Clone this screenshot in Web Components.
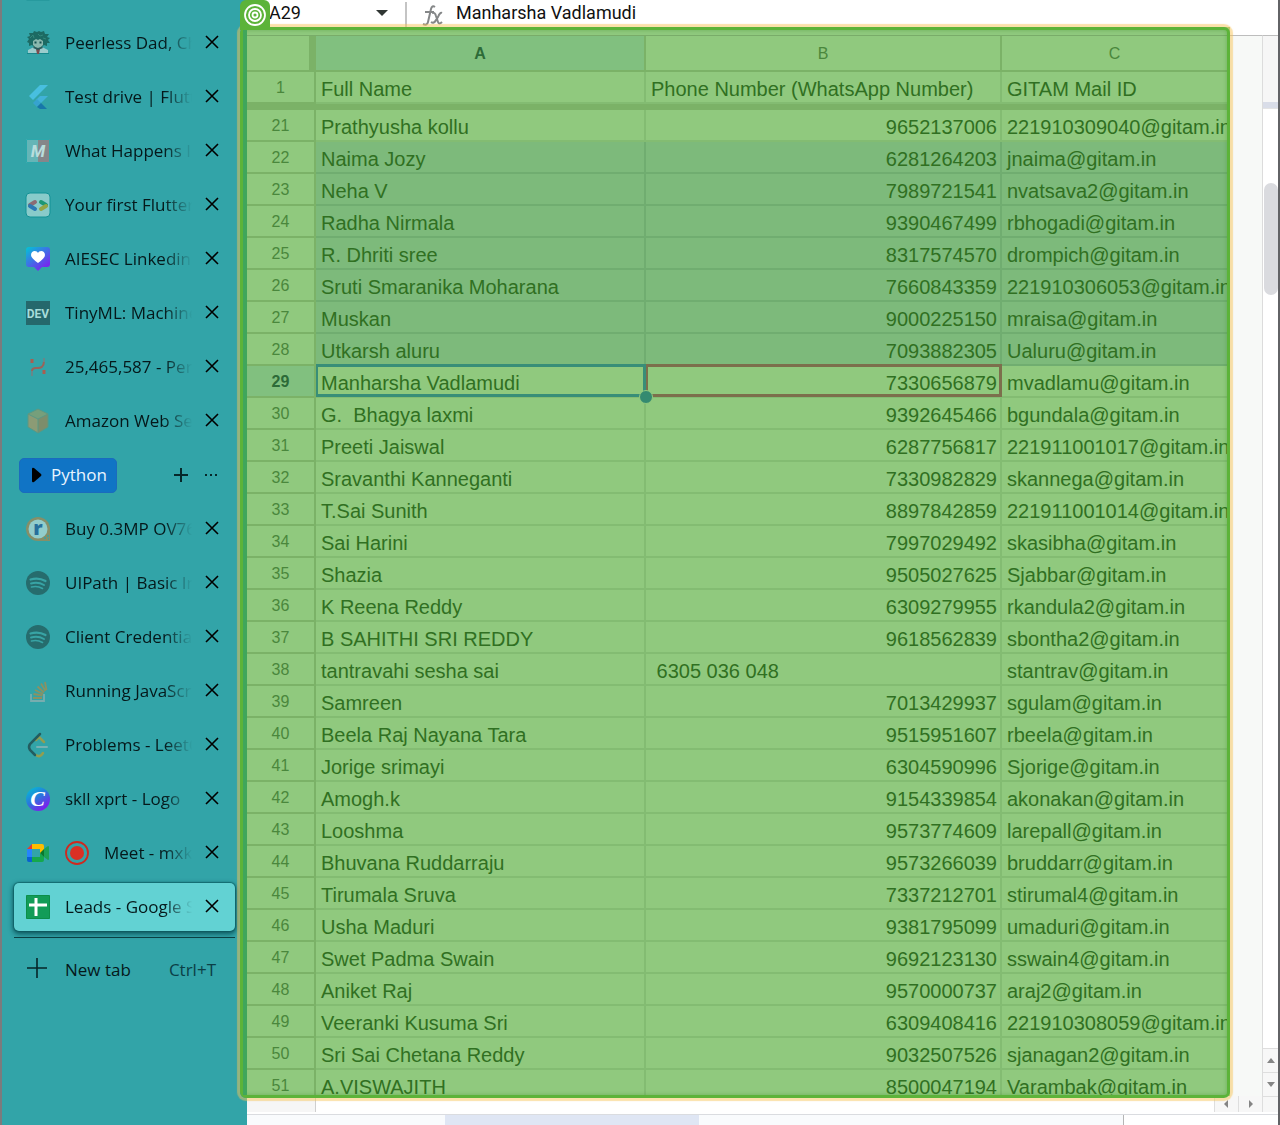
<!DOCTYPE html>
<html lang="en">
<head>
<meta charset="utf-8">
<title>Leads - Google Sheets</title>
<style>
body{margin:0;font-family:"Open Sans","Noto Sans",sans-serif;background:#fff}
</style>
</head>
<body>
<browser-window>
  <tab-strip slot="side">
    <tab-item icon="blank"></tab-item>
    <tab-item icon="hero">Peerless Dad, Chapter 1</tab-item>
    <tab-item icon="flutter">Test drive | Flutter docs</tab-item>
    <tab-item icon="m">What Happens Internally</tab-item>
    <tab-item icon="codelab">Your first Flutter app</tab-item>
    <tab-item icon="heart">AIESEC Linkedin Post</tab-item>
    <tab-item icon="dev">TinyML: Machine Learning</tab-item>
    <tab-item icon="perm">25,465,587 - Personal</tab-item>
    <tab-item icon="box">Amazon Web Services</tab-item>
    <tab-group>Python</tab-group>
    <tab-item icon="robu">Buy 0.3MP OV7670 Camera</tab-item>
    <tab-item icon="wave">UIPath | Basic Intro</tab-item>
    <tab-item icon="wave">Client Credentials Flow</tab-item>
    <tab-item icon="stack">Running JavaScript Code</tab-item>
    <tab-item icon="leet">Problems - LeetCode</tab-item>
    <tab-item icon="canva">skll xprt - Logo</tab-item>
    <tab-item icon="meet" recording>Meet - mxk-room</tab-item>
    <tab-item icon="sheets" active>Leads - Google Sheets</tab-item>
    <new-tab slot="end"></new-tab>
  </tab-strip>
  <sheet-view></sheet-view>
</browser-window>

<script>
const define=(name,html)=>customElements.define(name,class extends HTMLElement{
  constructor(){super();this.attachShadow({mode:'open'})}
  connectedCallback(){
    if(this.shadowRoot.childNodes.length)return;
    this.shadowRoot.innerHTML=typeof html==='function'?html(this):html;
  }
});

const icons={
blank:'<rect x="1" y="1" width="22" height="22" fill="#8fd0cf" stroke="#1c9094"/>',
hero:'<path d="M2 23v-4l6-3 4 3 4-3 6 3v4z" fill="#9bcccd"/><path d="M1 22h22v1H1z" fill="#17888c"/><path d="M10 18h4l-1 5h-2z" fill="#7a4b4f"/><path d="M7 17l2-3h6l2 3-5 2z" fill="#2b5c5c"/><path d="M1 11l2-3-2-2 3-1-1-3 4 0 1-2 3 1 2-1 2 1 3-1 1 3 4 0-2 3 3 1-2 2 2 3-3 0 0 3-3-1-2 2-8 0-2-2-3 1 0-3z" fill="#1c6a63"/><path d="M7 10l3-2 2 1 2-1 3 2v4q-5 6-10 0z" fill="#8ab8ae"/><path d="M4 7l3-3 1 3M12 3l2 2 3-1M17 7l3 1" fill="none" stroke="#32877b"/><path d="M8.500 11.500h2M13.500 11.500h2" stroke="#155150" stroke-width="2"/>',
flutter:'<path d="M14 0h8L7 15l-4-4z" fill="#48bfdf"/><path d="M14 11h8l-7 7-5-3z" fill="#41b2d8"/><path d="M7 18l4-4 4 4-4 4z" fill="#36a3cf"/><path d="M15 18l6 6h-7l-3-2z" fill="#1777a9"/>',
m:'<path d="M0 0h12v24H0z" fill="#65b5b7"/><path d="M12 0h12v24H12z" fill="#85868a"/><path d="M.5.500h23v23H.5z" fill="none" stroke="#2ba8ac"/><text x="12" y="18" text-anchor="middle" font-family="Roboto" font-size="17" font-weight="700" font-style="italic" fill="#b9dddd">M</text>',
codelab:'<rect x="0" y="0" width="24" height="24" rx="4" fill="#89cbca" stroke="#139296"/><g fill="none" stroke-width="4" stroke-linecap="round"><path d="M9 9l-5 3" stroke="#8b6b74"/><path d="M4 13l5 3" stroke="#2b79b5"/><path d="M15 9l5 3" stroke="#1c9775"/><path d="M20 13l-5 3" stroke="#93a545"/></g>',
heart:'<defs><linearGradient id="g" x2=".8" y2="1"><stop stop-color="#00c6d5"/><stop offset=".45" stop-color="#3978e5"/><stop offset="1" stop-color="#8417f1"/></linearGradient></defs><path d="M3 0h18q3 0 3 3v14q0 3-3 3h-5l-4 4-4-4H3q-3 0-3-3V3q0-3 3-3z" fill="url(#g)"/><path d="M12 16Q5 11 5 8c0-5 6-5 7-2 1-3 7-3 7 2q0 3-7 8z" fill="#fff"/>',
dev:'<path d="M0 0h24v24H0z" fill="#25686c"/><text x="12" y="17" text-anchor="middle" font-family="Roboto" font-size="12" font-weight="700" fill="#a7dcda">DEV</text>',
perm:'<g fill="none" stroke-width="2"><path d="M6 16q0-3 4-3 8 1 8-7" stroke="#9a6359"/><path d="M6 4v4M18 15v4" stroke="#a95e50" stroke-width="3"/><path d="M6 16v5M18 3v4" stroke="#67888a"/></g>',
box:'<path d="M12 0l10 5v13l-10 6-10-6V5z" fill="#8c9b75"/><path d="M2 5l10 5 10-5-10-5z" fill="#769f7b"/><path d="M12 10l10-5v13l-10 6z" fill="#7d8d6b"/><path d="M12 0l10 5v13l-10 6-10-6V5zM2 5l10 5 10-5M12 10v13" fill="none" stroke="#5a9884"/>',
robu:'<path d="M12 0a12 12 0 0 1 12 12v12H12a12 12 0 0 1 0-24z" fill="#858f69"/><circle cx="12" cy="12" r="9.500" fill="#92cdcc"/><path d="M18 21h2M21 19h2M22 22h1" stroke="#32a4a8" stroke-width="1.500"/><text x="12" y="18" text-anchor="middle" font-family="Open Sans" font-size="20" font-weight="800" fill="#276f9b">r</text>',
wave:'<circle cx="12" cy="12" r="12" fill="#266c6d"/><g fill="none" stroke="#38a4a5" stroke-linecap="round"><path d="M4.500 8.500q8-2.500 15 1.500" stroke-width="2.200"/><path d="M5 12.500q7-2 13 1.500" stroke-width="1.900"/><path d="M5.500 16q6-1.500 11 1.500" stroke-width="1.600"/></g>',
stack:'<g fill="none" stroke-width="1.800"><path d="M5 15v7h13v-7" stroke="#78adaf"/><path d="M7 19h9M7.500 15l9 1.500M9 11l8 4M11.500 7.500l6.500 6M15 4.500l4.500 7.500M19 3l1.500 8" stroke="#8a9263"/></g>',
leet:'<g fill="none" stroke-width="2.500" stroke-linecap="round"><path d="M10 7l3-3 5 5M10 22q4 3 7-2" stroke="#919e51"/><path d="M14 1L4 11q-2 3 0 6l5 5" stroke="#235d60"/><path d="M11 14h10" stroke="#77b1b3" stroke-width="2"/></g>',
canva:'<defs><linearGradient id="g" x2=".7" y2="1"><stop stop-color="#00c7d2"/><stop offset=".5" stop-color="#267bdc"/><stop offset="1" stop-color="#8515ef"/></linearGradient></defs><circle cx="12" cy="12" r="12" fill="url(#g)"/><text x="11.500" y="19" text-anchor="middle" font-family="Liberation Serif" font-size="22" font-style="italic" font-weight="700" fill="#fff">C</text>',
meet:'<path d="M1 8l5-5v5z" fill="#e33e2e"/><path d="M6 3h10q2 0 2 2v5l-4 3V8H6z" fill="#fdbd00"/><path d="M1 8h5v8H1z" fill="#2684fc"/><path d="M1 16h5v5H3q-2 0-2-2z" fill="#0860d2"/><path d="M6 16h8v-4l4 4v3q0 2-2 2H6z" fill="#15a84c"/><path d="M14 12l4-4v8z" fill="#08792f"/><path d="M18 8l4-3q1 0 1 1v12q0 1-1 1l-4-3z" fill="#1ba157"/>',
sheets:'<rect width="24" height="24" rx="2" fill="#129c58"/><path d="M.5.500h23v23H.5z" fill="none" stroke="#0c8e49"/><path d="M10 3v18M3 10h18" fill="none" stroke="#fff" stroke-width="3"/>'
};
const svg=(body,w=24,h=24)=>`<svg width="${w}" height="${h}" viewBox="0 0 ${w} ${h}" aria-hidden="true">${body}</svg>`;
const btn='button{border:0;background:none;padding:0;margin:0;color:inherit;font:inherit;display:flex;align-items:center;justify-content:center}';

define('browser-window',`<style>
:host{display:flex;height:100vh;box-sizing:border-box;overflow:hidden;border-left:2px solid #7b7b7d;border-right:2px solid #626366}
::slotted(tab-strip){flex:0 0 245px}
</style><slot name="side"></slot><slot></slot>`);

define('tab-strip',`<style>
:host{display:block;background:#32a4a8;color:#05181a;font-size:17px;line-height:24px;box-sizing:border-box;padding:0 12px;overflow:hidden}
nav{margin-top:-35px}
</style><nav><slot></slot></nav><slot name="end"></slot>`);

define('tab-item',el=>`<style>
:host{display:flex;align-items:center;height:48px;margin:0 0 6px;padding:0 15px 0 12px;border-radius:5px}
:host([active]){background:#62d2d3;box-shadow:0 2px 5px 1px #0c555c,0 0 1px 1px #16777b}
a{flex:1;min-width:0;display:flex;align-items:center;color:inherit;text-decoration:none}
svg{flex:none;display:block;overflow:visible}
.t{flex:1;min-width:0;margin-left:15px;white-space:nowrap;overflow:hidden;-webkit-mask-image:linear-gradient(to left,transparent,#000 28px);mask-image:linear-gradient(to left,transparent,#000 28px)}
.rec{margin-left:15px}
${btn}
button{width:16px;height:24px;margin-left:12px}
</style><a href="#">${svg(icons[el.getAttribute('icon')])}${el.hasAttribute('recording')?`<svg class="rec" width="24" height="24" viewBox="0 0 24 24"><circle cx="12" cy="12" r="11" fill="none" stroke="#cf291f" stroke-width="1.800"/><circle cx="12" cy="12" r="7" fill="#da3024"/></svg>`:''}<span class="t"><slot></slot></span></a>
<button aria-label="Close tab">${svg('<path d="M2 1l12 12M14 1L2 13" stroke="#000" stroke-width="1.600"/>',16,16)}</button>`);

define('tab-group',`<style>
:host{display:flex;align-items:center;height:54px;margin-top:-3px;margin-bottom:3px;padding:0 17px 0 5px}
${btn}
.name{height:35px;padding:0 9px 0 12px;gap:8px;background:#1074c5;color:#e9f5ff;border:1px solid #1b6bbd;border-radius:5px}
.add{margin-left:auto;width:18px;height:24px}
.more{width:14px;height:24px;margin-left:14px}
</style><button class="name">${svg('<path d="M0 2q0-2 2-1l7 6q1 1 0 2l-7 6q-2 1-2-1z" fill="#000"/>',11,16)}<slot></slot></button>
<button class="add" aria-label="Add tab">${svg('<path d="M8 1v14M1 8h14" stroke="#06282a" stroke-width="2"/>',16,16)}</button>
<button class="more" aria-label="More">${svg('<path d="M1 2h2M6 2h2M11 2h2" stroke="#06282a" stroke-width="2"/>',14,4)}</button>`);

define('new-tab',`<style>
:host{display:block;border-top:1px solid #0b3f42}
${btn}
button{width:100%;height:64px;padding:0 19px 0 11px;text-align:left}
span{margin-left:16px}
kbd{margin-left:auto;font:inherit;color:#0b3f46}
</style><button>${svg('<path d="M12 0v20M2 10h20" stroke="#062527" stroke-width="1.600"/>')}<span>New tab</span><kbd>Ctrl+T</kbd></button>`);

define('formula-bar',`<style>
:host{display:flex;align-items:center;height:27px;background:#fff;color:#111;font-family:Roboto,sans-serif}
input{border:0;padding:0;margin:0;background:none;font:inherit;font-size:18px;line-height:24px;height:24px;margin-bottom:2px;color:inherit;min-width:0;outline:0}
.name{width:107px;margin-left:22px}
.line{align-self:flex-end;width:2px;height:25px;background:#c4c4c4;margin:0 15px 0 17px}
.value{flex:1;margin-left:12px}
</style><input class="name" aria-label="Name box" value="A29">${svg('<path d="M0 0h12L6 6z" fill="#303633"/>',12,8)}<span class="line"></span>
${svg('<g fill="none" stroke="#858788" stroke-width="2"><path d="M13 5q-3-2-4 2L6 20q-1 4-5 2M3 10h9M10 11q3-1 4 3l2 6q1 3 4 0M20 11q-2-1-4 4l-2 3q-2 4-5 2"/></g>',22,24)}
<input class="value" aria-label="Formula" value="Manharsha Vadlamudi">`);

const rows=`21|Prathyusha kollu|9652137006|221910309040@gitam.in
22|Naima Jozy|6281264203|jnaima@gitam.in
23|Neha V|7989721541|nvatsava2@gitam.in
24|Radha Nirmala|9390467499|rbhogadi@gitam.in
25|R. Dhriti sree|8317574570|drompich@gitam.in
26|Sruti Smaranika Moharana|7660843359|221910306053@gitam.in
27|Muskan|9000225150|mraisa@gitam.in
28|Utkarsh aluru|7093882305|Ualuru@gitam.in
29|Manharsha Vadlamudi|7330656879|mvadlamu@gitam.in
30|G.  Bhagya laxmi|9392645466|bgundala@gitam.in
31|Preeti Jaiswal|6287756817|221911001017@gitam.in
32|Sravanthi Kanneganti|7330982829|skannega@gitam.in
33|T.Sai Sunith|8897842859|221911001014@gitam.in
34|Sai Harini|7997029492|skasibha@gitam.in
35|Shazia|9505027625|Sjabbar@gitam.in
36|K Reena Reddy|6309279955|rkandula2@gitam.in
37|B SAHITHI SRI REDDY|9618562839|sbontha2@gitam.in
38|tantravahi sesha sai| 6305 036 048|stantrav@gitam.in
39|Samreen|7013429937|sgulam@gitam.in
40|Beela Raj Nayana Tara|9515951607|rbeela@gitam.in
41|Jorige srimayi|6304590996|Sjorige@gitam.in
42|Amogh.k|9154339854|akonakan@gitam.in
43|Looshma|9573774609|larepall@gitam.in
44|Bhuvana Ruddarraju|9573266039|bruddarr@gitam.in
45|Tirumala Sruva|7337212701|stirumal4@gitam.in
46|Usha Maduri|9381795099|umaduri@gitam.in
47|Swet Padma Swain|9692123130|sswain4@gitam.in
48|Aniket Raj|9570000737|araj2@gitam.in
49|Veeranki Kusuma Sri|6309408416|221910308059@gitam.in
50|Sri Sai Chetana Reddy|9032507526|sjanagan2@gitam.in
51|A.VISWAJITH|8500047194|Varambak@gitam.in`.split('\n').map(r=>r.split('|'));

define('data-grid',()=>`<style>
:host{display:block;overflow:hidden;background:#90c97e;border-top:1px solid #79ac69;font-family:"Liberation Sans",Arial,sans-serif}
table{width:100%;table-layout:fixed;border-collapse:separate;border-spacing:0;color:#307022}
th,td{box-sizing:border-box;height:32px;border:0 solid #83bc72;border-width:0 2px 2px 0;white-space:pre;overflow:hidden;text-align:left}
th{border-color:#7bb267;color:#4a873c;font-size:16px;line-height:28px;font-weight:400;text-align:center;padding:2px 0 0}
thead th{height:36px;line-height:32px}
thead th:first-child{border-right-width:7px}
td{font-size:20px;line-height:24px;padding:5px 3px 1px 5px}
td.num{text-align:right}
th:last-child,td:last-child{border-right:0}
.freeze td{height:6px;padding:0;border:0;background:#7bb267}
.done td{background:#7dba7b;border-color:#70ad70}
.on{background:#81c07f;color:#2d6b38;font-weight:700}
.sel{position:relative;overflow:visible}
.sel::after{content:"";position:absolute;inset:-2px -2px -1px 0;border:3px solid #388e78;border-left-width:2px;pointer-events:none}
.peer::after{border:3px solid #7c6f4c;border-left-width:2px}
.knob{position:absolute;right:-9px;bottom:-8px;width:12px;height:12px;border-radius:50%;background:#348a70;border:1px solid #90c97e;z-index:2}
</style><table><colgroup><col style="width:69px"><col style="width:330px"><col style="width:356px"><col></colgroup>
<thead><tr><th></th><th class="on">A</th><th>B</th><th>C</th></tr></thead>
<tbody><tr><th>1</th><td>Full Name</td><td>Phone Number (WhatsApp Number)</td><td>GITAM Mail ID</td></tr>
<tr class="freeze"><td colspan="4"></td></tr>
${rows.map(([n,a,b,c])=>{const s=n==='29';return `<tr class="${n>21&&n<29?'done':''}"><th class="${s?'on':''}">${n}</th><td class="${s?'sel':''}">${a}${s?'<span class="knob"></span>':''}</td><td class="${n==='38'?'':'num'} ${s?'sel peer':''}">${b}</td><td>${c}</td></tr>`}).join('')}
</tbody></table>`);

const arrow=d=>svg(`<path d="${d}" fill="#858585"/>`,10,10);
define('sheet-view',`<style>
:host{flex:1;min-width:0;display:flex;flex-direction:column;position:relative;background:#fff}
.mid{flex:1;min-height:0;display:flex}
.capture{flex:1;min-width:0;display:flex;flex-direction:column;padding:8px 3px 0 0;background:#90c97e}
data-grid{flex:1;min-height:0}
.rest{flex:0 0 32px;display:flex;margin-top:8px;border-top:1px solid #bdbdbd;background:#f7f9f7}
.bar{flex:0 0 16px;display:flex;flex-direction:column;box-sizing:border-box;margin-top:8px;border-top:1px solid #bdbdbd;border-left:1px solid #dcdcdc}
.top{height:66px;background:#f6f6f6}
.frz{height:6px;background:#d9dde8;border-bottom:1px solid #e3e3e3}
.track{flex:1;padding:74px 0 0 1px}
.thumb{height:112px;border-radius:7px;background:#dadbdf}
${btn}
button{box-sizing:border-box;background:#f7f7f7;border:0 solid #dedede}
.bar button{height:24px;border-top-width:1px}
.bottom{height:18px;display:flex;background:#fff;border-bottom:1px solid #dadce0}
.bottom span{flex:0 0 69px;height:16px;box-sizing:border-box;background:#f6f6f6;border-right:1px solid #cfcfcf}
.bottom button{width:24px;height:16px;border-left-width:1px}
.bottom button:first-of-type{margin-left:auto}
.bottom i{width:16px;height:16px;box-sizing:border-box;background:#f7f7f7;border-left:1px solid #dedede;border-top:1px solid #dedede}
.tabs{height:10px;display:flex;background:#f9fbfd}
.tabs b{width:254px;margin-left:198px;background:#dfe6f4}
.tabs u{width:154px;margin-left:auto;border-left:1px solid #b5b5b5;background:#fff}
.frame{position:absolute;left:-7px;right:48px;top:27px;bottom:27px;box-sizing:border-box;border:3px solid #5cb339;border-radius:6px;box-shadow:0 0 1px 3px rgba(247,196,85,.5),inset 0 0 4px rgba(65,145,45,.45);pointer-events:none}
.frame::before{content:"";position:absolute;left:0;top:0;bottom:0;width:4px;background:#40a65b}
.badge{position:absolute;left:-7px;top:0;width:30px;height:30px;border-radius:6px 6px 0 0;background:#5cb339}
</style><formula-bar></formula-bar>
<div class="mid"><div class="capture"><data-grid></data-grid></div><div class="rest"></div>
<div class="bar"><div class="top"></div><div class="frz"></div><div class="track"><div class="thumb"></div></div><button aria-label="Up">${arrow('M1 7l4-5 4 5z')}</button><button aria-label="Down">${arrow('M1 2l4 5 4-5z')}</button></div></div>
<div class="bottom"><span></span><button aria-label="Left">${arrow('M6 1L2 5l4 4z')}</button><button aria-label="Right">${arrow('M3 1l4 4-4 4z')}</button><i></i></div>
<div class="tabs"><b></b><u></u></div>
<div class="frame"></div>
<div class="badge">${svg('<g fill="none" stroke="#fff" stroke-width="1.800"><circle cx="15" cy="15" r="10"/><circle cx="15" cy="15" r="6"/><circle cx="15" cy="15" r="2.500"/></g>',30,30)}</div>`);
</script>
</body>
</html>
